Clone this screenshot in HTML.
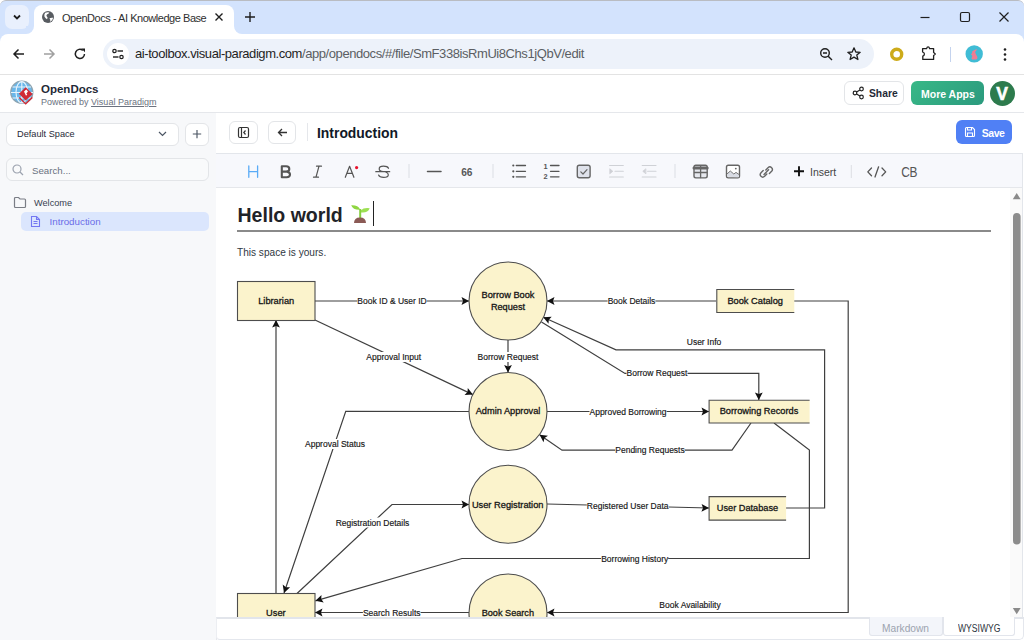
<!DOCTYPE html>
<html><head><meta charset="utf-8">
<style>
*{box-sizing:border-box;margin:0;padding:0}
html,body{width:1024px;height:640px;overflow:hidden;background:#fff;font-family:"Liberation Sans",sans-serif;position:relative}
.a{position:absolute}
#tabstrip{left:0;top:0;width:1024px;height:35px;background:#d3e3fd;border-top:1px solid #b9bcc2;border-radius:6px 6px 0 0}
#toolbar{left:0;top:34px;width:1024px;height:41px;background:#fff;border-bottom:1px solid #e3e3e3}
#omni{left:103px;top:39px;width:771px;height:30px;background:#edf2fa;border-radius:15px}
#apphdr{left:0;top:75px;width:1024px;height:38px;background:#fff;border-bottom:1px solid #e5e7eb}
#sidebar{left:0;top:113px;width:217px;height:527px;background:#f7f8fa;border-right:1px solid #e5e7eb}
#edhdr{left:216px;top:113px;width:808px;height:40px;background:#fff}
#edtb{left:216px;top:153px;width:807px;height:35px;background:#f7f8fc;border-top:1px solid #e3e6eb;border-bottom:1px solid #e5e7eb;border-right:1px solid #e3e6eb}
#doc{left:216px;top:188px;width:808px;height:429px;background:#fff;overflow:hidden}
#status{left:216px;top:617px;width:808px;height:23px;background:#fff;border-top:2px solid #e2e5eb;border-bottom:1px solid #e4e7ed;border-left:1px solid #eceef2;border-right:1.5px solid #e4e7ed;border-radius:0 0 5px 4px}
.btn{border:1px solid #e3e5e8;border-radius:6px;background:#fff}
.ic{stroke:#555;fill:none;stroke-width:1.4;stroke-linecap:round;stroke-linejoin:round}
</style></head><body>

<!-- Browser tab strip -->
<div id="tabstrip" class="a"></div>
<div class="a" style="left:5px;top:5px;width:24px;height:24px;background:#e9f0fd;border-radius:7px"></div>
<svg class="a" style="left:11px;top:11px" width="12" height="12" viewBox="0 0 12 12"><path d="M3 4.5 L6 7.5 L9 4.5" stroke="#1f1f1f" stroke-width="1.8" fill="none"/></svg>
<div class="a" style="left:34px;top:5px;width:200px;height:30px;background:#fff;border-radius:8px 8px 0 0"></div>
<div class="a" style="left:26px;top:26px;width:8px;height:9px;background:#fff"></div>
<div class="a" style="left:26px;top:26px;width:8px;height:8px;background:#d3e3fd;border-bottom-right-radius:8px"></div>
<div class="a" style="left:234px;top:26px;width:8px;height:9px;background:#fff"></div>
<div class="a" style="left:234px;top:26px;width:8px;height:8px;background:#d3e3fd;border-bottom-left-radius:8px"></div>
<svg class="a" style="left:41px;top:10px" width="14" height="14" viewBox="41 10 14 14"><circle cx="48" cy="17" r="6" fill="#585c61"/><path d="M45.2 12.8 Q47.5 12 49.3 12.6 Q48.6 14 47.2 14.3 Q45.8 15.2 46.8 16.5 Q48.4 17.8 47 19.2 Q45.6 18.4 44.5 16.7 Q43.8 14.6 45.2 12.8 Z M49.5 18.3 Q51 17.4 53.2 17.8 Q52.6 20.6 50.2 22 Q51 20.5 49.5 18.3 Z" fill="#fff"/></svg>
<div class="a" style="left:62px;top:11px;font-size:11px;color:#2f2f2f;white-space:nowrap;line-height:14px;letter-spacing:-0.46px">OpenDocs - AI Knowledge Base</div>
<svg class="a" style="left:214px;top:12px" width="10" height="10" viewBox="0 0 10 10"><path d="M1.5 1.5 L8.5 8.5 M8.5 1.5 L1.5 8.5" stroke="#1f1f1f" stroke-width="1.4"/></svg>
<svg class="a" style="left:244px;top:11px" width="12" height="12" viewBox="0 0 12 12"><path d="M6 1 V11 M1 6 H11" stroke="#1f1f1f" stroke-width="1.4"/></svg>
<svg class="a" style="left:918px;top:12px" width="14" height="10"><path d="M2.5 5.5 H11.5" stroke="#1f1f1f" stroke-width="1.2"/></svg>
<svg class="a" style="left:958px;top:11px" width="14" height="12"><rect x="2.5" y="1.5" width="9" height="9" rx="1.5" stroke="#1f1f1f" stroke-width="1.2" fill="none"/></svg>
<svg class="a" style="left:997px;top:11px" width="14" height="12"><path d="M2.5 1.5 L11.5 10.5 M11.5 1.5 L2.5 10.5" stroke="#1f1f1f" stroke-width="1.2"/></svg>

<!-- Browser toolbar -->
<div id="toolbar" class="a"></div>
<div class="a" style="left:0;top:34px;width:8px;height:8px;background:#d3e3fd"></div>
<div class="a" style="left:0;top:34px;width:8px;height:8px;background:#fff;border-top-left-radius:8px"></div>
<div class="a" style="left:1016px;top:34px;width:8px;height:8px;background:#d3e3fd"></div>
<div class="a" style="left:1016px;top:34px;width:8px;height:8px;background:#fff;border-top-right-radius:8px"></div>
<svg class="a" style="left:12px;top:47px" width="14" height="14" viewBox="0 0 14 14"><path d="M12 7 H2.5 M6.5 2.5 L2 7 L6.5 11.5" stroke="#1f1f1f" stroke-width="1.5" fill="none"/></svg>
<svg class="a" style="left:42px;top:47px" width="14" height="14" viewBox="0 0 14 14"><path d="M2 7 H11.5 M7.5 2.5 L12 7 L7.5 11.5" stroke="#a0a0a0" stroke-width="1.5" fill="none"/></svg>
<svg class="a" style="left:73px;top:47px" width="14" height="14" viewBox="0 0 14 14"><path d="M11.5 7 A4.6 4.6 0 1 1 9.8 3.3" stroke="#1f1f1f" stroke-width="1.5" fill="none"/><path d="M8.3 1.5 L12 1.5 L12 5.2 Z" fill="#1f1f1f"/></svg>
<div id="omni" class="a"></div>
<div class="a" style="left:107px;top:43px;width:22px;height:22px;background:#fff;border-radius:11px"></div>
<svg class="a" style="left:111px;top:47px" width="14" height="14" viewBox="0 0 14 14"><circle cx="3.5" cy="4" r="1.7" stroke="#1f1f1f" stroke-width="1.2" fill="none"/><path d="M6.5 4 H12" stroke="#1f1f1f" stroke-width="1.4"/><circle cx="10.5" cy="10" r="1.7" stroke="#1f1f1f" stroke-width="1.2" fill="none"/><path d="M2 10 H7.5" stroke="#1f1f1f" stroke-width="1.4"/></svg>
<div class="a" style="left:135px;top:46px;font-size:13px;color:#1f1f1f;white-space:nowrap;line-height:16px;letter-spacing:-0.43px">ai-toolbox.visual-paradigm.com<span style="color:#5b5e63">/app/opendocs/#/file/SmF338isRmUi8Chs1jQbV/edit</span></div>
<svg class="a" style="left:819px;top:47px" width="15" height="15" viewBox="0 0 15 15"><circle cx="6" cy="6" r="4.3" stroke="#1f1f1f" stroke-width="1.4" fill="none"/><path d="M4 6 H8 M9.2 9.2 L13 13" stroke="#1f1f1f" stroke-width="1.4"/></svg>
<svg class="a" style="left:846px;top:46px" width="16" height="16" viewBox="0 0 16 16"><path d="M8 1.8 L9.8 6 L14.2 6.3 L10.8 9.1 L11.9 13.5 L8 11.1 L4.1 13.5 L5.2 9.1 L1.8 6.3 L6.2 6 Z" stroke="#1f1f1f" stroke-width="1.3" fill="none" stroke-linejoin="round"/></svg>
<svg class="a" style="left:889px;top:47px" width="15" height="15" viewBox="0 0 15 15"><circle cx="7.7" cy="7.3" r="5" stroke="#cdab1a" stroke-width="3.4" fill="none"/></svg>
<svg class="a" style="left:918px;top:44px" width="20" height="20" viewBox="918 44 20 20"><path d="M922.6 48.6 H926.6 Q927 46.9 928.1 46.9 Q929.2 46.9 929.6 48.6 H933.6 V52.4 L935.3 54 L933.6 55.6 V59.4 H922.8 V56.2 Q924.4 55.5 924.4 54 Q924.4 52.6 922.6 52 Z" stroke="#1f1f1f" stroke-width="1.3" fill="none" stroke-linejoin="round"/></svg>
<div class="a" style="left:950px;top:47px;width:1px;height:15px;background:#c4d3ee"></div>
<svg class="a" style="left:965px;top:45px" width="18" height="18" viewBox="965 45 18 18"><circle cx="974.2" cy="53.9" r="8.7" fill="#40bcd5"/><path d="M972.3 51.2 Q974.5 49.8 976.9 49.1 Q976.3 50.9 975.1 52.1 Q975.6 54.5 977.3 56.8 Q978 59.6 975 59.6 H972.1 Q970.6 58.6 972.2 56.6 Q972.9 55.4 971 54.7 Q972.5 53.6 972.3 51.2 Z" fill="#ef7d93"/></svg>
<svg class="a" style="left:999px;top:47px" width="12" height="15" viewBox="0 0 12 15"><circle cx="6" cy="2.5" r="1.3" fill="#1f1f1f"/><circle cx="6" cy="7.5" r="1.3" fill="#1f1f1f"/><circle cx="6" cy="12.5" r="1.3" fill="#1f1f1f"/></svg>

<!-- App header -->
<div id="apphdr" class="a"></div>
<svg class="a" style="left:6px;top:78px" width="32" height="30" viewBox="6 78 32 30">
<circle cx="21.8" cy="92.2" r="11" fill="#6ab7ea" stroke="#8ea5b2" stroke-width="1.3"/>
<g stroke="#e8f4fc" stroke-width="1.1" fill="none"><path d="M11 92.5 H33 M12.5 87 H31 M12.5 98 H31"/><path d="M21.8 81.5 V103"/><ellipse cx="21.8" cy="92.2" rx="5.8" ry="10.6"/></g>
<path d="M25.7 87.2 L32.6 94 L25.7 100.6 L18.9 93.8 Z" fill="#d02a35"/>
<path d="M19.5 96.8 L25.7 103 L32.2 96.6 L32.6 98.3 L25.7 104.8 L19 98.3 Z" fill="#d02a35"/>
<path d="M24 91.6 L26.3 89.6 L28 91.6 L26.3 93.4 L27.3 94.6 L26 95.8 Z" fill="#fff"/>
</svg>
<div class="a" style="left:41px;top:82px;font-size:11.5px;font-weight:bold;color:#1f2937;line-height:15px;white-space:nowrap">OpenDocs</div>
<div class="a" style="left:41px;top:97px;font-size:9px;color:#6b7280;line-height:11px;white-space:nowrap">Powered by <span style="text-decoration:underline">Visual Paradigm</span></div>

<div class="a btn" style="left:844px;top:81px;width:60px;height:24px"></div>
<svg class="a" style="left:852px;top:86px" width="13" height="14" viewBox="0 0 13 14"><circle cx="9.5" cy="3" r="1.8" stroke="#222" stroke-width="1.2" fill="none"/><circle cx="3" cy="7" r="1.8" stroke="#222" stroke-width="1.2" fill="none"/><circle cx="9.5" cy="11" r="1.8" stroke="#222" stroke-width="1.2" fill="none"/><path d="M4.6 6 L7.9 4 M4.6 8 L7.9 10" stroke="#222" stroke-width="1.2"/></svg>
<div class="a" style="left:869px;top:87px;font-size:10.3px;font-weight:bold;color:#1f2937;line-height:14px">Share</div>
<div class="a" style="left:911px;top:81px;width:73px;height:24px;border-radius:6px;background:linear-gradient(135deg,#38b887,#2b9a7e)"></div>
<div class="a" style="left:921px;top:87px;font-size:10.5px;font-weight:bold;color:#fff;line-height:14px;white-space:nowrap">More Apps</div>
<div class="a" style="left:989.5px;top:81px;width:25px;height:25px;border-radius:13px;background:#2d7b4d"></div>
<div class="a" style="left:989.5px;top:83.5px;width:25px;text-align:center;font-size:17.5px;font-weight:bold;color:#fff;line-height:20px;-webkit-text-stroke:0.6px #fff">V</div>

<!-- Sidebar -->
<div id="sidebar" class="a"></div>
<div class="a btn" style="left:6px;top:123px;width:173px;height:23px"></div>
<div class="a" style="left:17px;top:128px;font-size:9.2px;color:#1f2937;line-height:12px;white-space:nowrap">Default Space</div>
<svg class="a" style="left:157px;top:129px" width="11" height="10" viewBox="0 0 11 10"><path d="M2 3 L5.5 6.5 L9 3" stroke="#4b5563" stroke-width="1.2" fill="none"/></svg>
<div class="a btn" style="left:185px;top:123px;width:24px;height:23px"></div>
<svg class="a" style="left:191px;top:128px" width="12" height="12" viewBox="0 0 12 12"><path d="M6 2 V10.2 M1.8 6 H10.2" stroke="#4b5563" stroke-width="1.15"/></svg>
<div class="a" style="left:6px;top:158px;width:203px;height:23px;border:1px solid #e3e5e8;border-radius:6px;background:#f9fafb"></div>
<svg class="a" style="left:12px;top:164px" width="12" height="12" viewBox="0 0 12 12"><circle cx="5" cy="5" r="4" stroke="#9ca3af" stroke-width="1.2" fill="none"/><path d="M8 8 L11 11" stroke="#9ca3af" stroke-width="1.2"/></svg>
<div class="a" style="left:32px;top:165px;font-size:9.7px;color:#6b7280;line-height:12px">Search...</div>
<svg class="a" style="left:13px;top:196px" width="14" height="13" viewBox="0 0 14 13"><path d="M1.5 2.5 A1 1 0 0 1 2.5 1.5 H5.5 L7 3 H11.5 A1 1 0 0 1 12.5 4 V10.5 A1 1 0 0 1 11.5 11.5 H2.5 A1 1 0 0 1 1.5 10.5 Z" stroke="#7a7d85" stroke-width="1.2" fill="none"/></svg>
<div class="a" style="left:34px;top:197px;font-size:9.2px;color:#374151;line-height:12px">Welcome</div>
<div class="a" style="left:21px;top:212px;width:188px;height:19px;background:#dbe6fd;border-radius:5px"></div>
<svg class="a" style="left:30px;top:215px" width="11" height="13" viewBox="0 0 11 13"><path d="M1.5 1.5 H6.5 L9.5 4.5 V11.5 H1.5 Z M6.5 1.5 V4.5 H9.5 M3.5 6.5 H7.5 M3.5 8.5 H7.5" stroke="#7478f2" stroke-width="1.1" fill="none"/></svg>
<div class="a" style="left:49.5px;top:216px;font-size:9.8px;color:#6a6de8;line-height:12px">Introduction</div>

<!-- Editor header -->
<div id="edhdr" class="a"></div>
<div class="a btn" style="left:229px;top:121px;width:29px;height:23px"></div>
<svg class="a" style="left:237px;top:126px" width="13" height="13" viewBox="0 0 13 13"><rect x="1.5" y="1.5" width="10" height="10" rx="1.5" stroke="#333" stroke-width="1.2" fill="none"/><path d="M4.5 1.5 V11.5 M8.5 4.5 L6.8 6.5 L8.5 8.5" stroke="#333" stroke-width="1.2" fill="none"/></svg>
<div class="a btn" style="left:268px;top:121px;width:28px;height:23px"></div>
<svg class="a" style="left:276px;top:126px" width="13" height="13" viewBox="0 0 13 13"><path d="M11 6.5 H2.5 M6 3 L2.5 6.5 L6 10" stroke="#333" stroke-width="1.3" fill="none"/></svg>
<div class="a" style="left:307px;top:123px;width:1px;height:18px;background:#e5e7eb"></div>
<div class="a" style="left:317px;top:125px;font-size:13.9px;font-weight:bold;color:#111827;line-height:16px">Introduction</div>
<div class="a" style="left:956px;top:120px;width:56px;height:24px;border-radius:6px;background:#5080f5"></div>
<svg class="a" style="left:964px;top:126px" width="12" height="12" viewBox="0 0 12 12"><path d="M1.5 2.5 A1 1 0 0 1 2.5 1.5 H8.5 L10.5 3.5 V9.5 A1 1 0 0 1 9.5 10.5 H2.5 A1 1 0 0 1 1.5 9.5 Z M3.5 1.5 V4 H7.5 V1.5 M3.5 10.5 V7 H8.5 V10.5" stroke="#fff" stroke-width="1.1" fill="none"/></svg>
<div class="a" style="left:981.8px;top:126.5px;font-size:10.5px;font-weight:bold;color:#fff;line-height:13px;letter-spacing:-0.5px">Save</div>

<!-- Editor toolbar -->
<div id="edtb" class="a"></div>
<svg class="a" style="left:216px;top:153px" width="808" height="35" viewBox="216 153 808 35">
<g fill="none" stroke-linecap="round" stroke-linejoin="round">
<path d="M248.8 166 V177.3 M257.6 166 V177.3 M248.8 171.6 H257.6" stroke="#5aabf6" stroke-width="1.3"/>
<path d="M281.8 166.2 H286.2 Q289.3 166.2 289.3 168.9 Q289.3 171 287 171.6 Q290 172.2 290 174.6 Q290 177.2 286.6 177.2 H281.8 Z M281.8 171.6 H286.6" stroke="#555" stroke-width="2.1"/>
<path d="M316.5 166.2 H321.5 M313.5 177.2 H318.5 M319 166.2 L316 177.2" stroke="#555" stroke-width="1.2"/>
<path d="M345.3 177.3 L349.6 166.3 L353.9 177.3 M346.9 173.4 H352.3" stroke="#555" stroke-width="1.2"/>
<path d="M388.5 168.3 Q387.5 166.2 383.5 166.2 Q379.2 166.2 379.2 168.9 Q379.2 171 383.2 171.6 M386 172.3 Q388.3 173.2 388.3 174.7 Q388.3 177.3 383.7 177.3 Q379.5 177.3 378.6 175 M375.8 171.7 H389.7" stroke="#555" stroke-width="1.2"/>
<path d="M427.5 171.5 H441" stroke="#555" stroke-width="1.5"/>
<path d="M513.3 165.5 h0.01 M513.3 171.3 h0.01 M513.3 176.8 h0.01" stroke="#555" stroke-width="2.2"/>
<path d="M516.3 165.5 H525.5 M516.3 171.3 H525.5 M516.3 176.8 H525.5" stroke="#555" stroke-width="1.3"/>
<path d="M550.5 165.5 H559 M550.5 171.3 H559 M550.5 176.8 H559" stroke="#555" stroke-width="1.3"/>
<rect x="577.3" y="165.3" width="12.8" height="12.5" rx="2" fill="#dfe2eb" stroke="#666" stroke-width="1.4"/>
<path d="M580.8 171.8 L583 174 L587 169.6" stroke="#666" stroke-width="1.2"/>
<path d="M609.6 165.5 H623.3 M609.6 177 H623.3 M615 171.3 H623.3" stroke="#cfd1d6" stroke-width="1.1"/>
<path d="M610 169 L612.8 171.3 L610 173.6 Z" fill="#cfd1d6" stroke="#cfd1d6" stroke-width="0.8"/>
<path d="M642.2 165.5 H656 M642.2 177 H656 M647.6 171.3 H656" stroke="#cfd1d6" stroke-width="1.1"/>
<path d="M645.6 169 L642.8 171.3 L645.6 173.6 Z" fill="#cfd1d6" stroke="#cfd1d6" stroke-width="0.8"/>
<rect x="694" y="165.3" width="13.2" height="12.6" rx="1.8" fill="#e6e8ee" stroke="#666" stroke-width="1.4"/>
<path d="M694 168 H707.2" stroke="#666" stroke-width="3"/>
<path d="M700.6 166 V177.6 M694.5 172.5 H706.8" stroke="#666" stroke-width="1.3"/>
<rect x="726.5" y="165.3" width="13" height="12.6" rx="1.8" fill="#fff" stroke="#666" stroke-width="1.4"/>
<path d="M727.2 176.8 V173.8 L730.3 171 L733.8 174 L736 172.4 L739 174.5 V177.3 Z" fill="#d9dce4" stroke="none"/>
<path d="M727.2 173.8 L730.3 171 L733.8 174 L736 172.4 L739 174.5" stroke="#777" stroke-width="1"/>
<circle cx="735.8" cy="168.6" r="0.9" fill="#666"/>
<path d="M763.2 170.5 L761 172.7 Q759.3 174.6 761 176.3 Q762.7 178 764.6 176.3 L766.8 174.1 M769.4 173.5 L771.6 171.3 Q773.3 169.4 771.6 167.7 Q769.9 166 768 167.7 L765.8 169.9 M764 174.4 L768.6 169.8" stroke="#666" stroke-width="1.4"/>
<path d="M799 166.3 V176.3 M794 171.3 H804" stroke="#111" stroke-width="1.9" stroke-linecap="butt"/>
<path d="M871.5 168 L867.8 171.9 L871.5 175.8 M882 168 L885.7 171.9 L882 175.8 M878.6 166.8 L875 177" stroke="#555" stroke-width="1.3"/>
</g>
<g fill="#dcdee3"><rect x="408.5" y="164" width="1" height="14"/><rect x="492.5" y="164" width="1" height="14"/><rect x="674.5" y="164" width="1" height="14"/><rect x="850.8" y="165" width="1" height="13"/></g>
<text x="461.3" y="175.5" font-family="Liberation Sans" font-weight="bold" font-size="10.2" fill="#585858" letter-spacing="-0.1">66</text>
<text x="543.6" y="169.2" font-family="Liberation Sans" font-weight="bold" font-size="7.4" fill="#555">1</text>
<text x="543.6" y="179.3" font-family="Liberation Sans" font-weight="bold" font-size="7.4" fill="#555">2</text>
<text x="810" y="175.5" font-family="Liberation Sans" font-size="10.5" fill="#444">Insert</text>
<text x="901.3" y="177" font-family="Liberation Sans" font-size="14.2" fill="#555" letter-spacing="-0.6" transform="translate(901.3 0) scale(0.84 1) translate(-901.3 0)">CB</text>
<circle cx="356.6" cy="167.6" r="1.6" fill="#e8112d"/>
</svg>

<!-- Document -->
<div id="doc" class="a"></div>
<svg class="a" style="left:216px;top:188px" width="808" height="429" viewBox="216 188 808 429">
<g><path d="M315 301 L469 301" stroke="#3f3f3f" stroke-width="1.2" fill="none"/><path d="M469.0 301.0 L461.5 304.9 L463.0 301.0 L461.5 297.1 Z" fill="#111"/><path d="M716 301 L547 301" stroke="#3f3f3f" stroke-width="1.2" fill="none"/><path d="M547.0 301.0 L554.5 297.1 L553.0 301.0 L554.5 304.9 Z" fill="#111"/><path d="M508 340 L508 372.5" stroke="#3f3f3f" stroke-width="1.2" fill="none"/><path d="M508.0 372.5 L504.1 365.0 L508.0 366.5 L511.9 365.0 Z" fill="#111"/><path d="M315 320 L472.9 394.6" stroke="#3f3f3f" stroke-width="1.2" fill="none"/><path d="M472.9 394.6 L464.5 394.9 L467.5 392.0 L467.8 387.9 Z" fill="#111"/><path d="M541.5 322 L625 373.4 L758.8 373.4 L758.8 400" stroke="#3f3f3f" stroke-width="1.2" fill="none"/><path d="M758.8 400.0 L754.9 392.5 L758.8 394.0 L762.7 392.5 Z" fill="#111"/><path d="M786 508 L824.6 508 L824.6 349.9 L616 349.9 L543.3 317.2" stroke="#3f3f3f" stroke-width="1.2" fill="none"/><path d="M543.3 317.2 L551.7 316.7 L548.8 319.7 L548.5 323.8 Z" fill="#111"/><path d="M794 301 L848.2 301 L848.2 612.5 L547 612.5" stroke="#3f3f3f" stroke-width="1.2" fill="none"/><path d="M547.0 612.5 L554.5 608.6 L553.0 612.5 L554.5 616.4 Z" fill="#111"/><path d="M547 411.5 L709 411.5" stroke="#3f3f3f" stroke-width="1.2" fill="none"/><path d="M709.0 411.5 L701.5 415.4 L703.0 411.5 L701.5 407.6 Z" fill="#111"/><path d="M751 423 L732 450.2 L562 450.2 L539.6 434.7" stroke="#3f3f3f" stroke-width="1.2" fill="none"/><path d="M539.6 434.7 L548.0 435.8 L544.5 438.1 L543.5 442.2 Z" fill="#111"/><path d="M774 423 L809.4 450 L809.4 558.5 L462 558.5 L315.4 600.8" stroke="#3f3f3f" stroke-width="1.2" fill="none"/><path d="M315.4 600.8 L321.5 595.0 L321.2 599.1 L323.7 602.5 Z" fill="#111"/><path d="M469 411.5 L345.75 411.25 L284 593" stroke="#3f3f3f" stroke-width="1.2" fill="none"/><path d="M284.0 593.0 L282.7 584.6 L285.9 587.3 L290.1 587.2 Z" fill="#111"/><path d="M297 593.5 L392 504.5 L469 504.5" stroke="#3f3f3f" stroke-width="1.2" fill="none"/><path d="M469.0 504.5 L461.5 508.4 L463.0 504.5 L461.5 500.6 Z" fill="#111"/><path d="M547 504 L709 508" stroke="#3f3f3f" stroke-width="1.2" fill="none"/><path d="M709.0 508.0 L701.4 511.7 L703.0 507.9 L701.6 503.9 Z" fill="#111"/><path d="M276 593.5 L276 320" stroke="#3f3f3f" stroke-width="1.2" fill="none"/><path d="M276.0 320.0 L279.9 327.5 L276.0 326.0 L272.1 327.5 Z" fill="#111"/><path d="M469 612.5 L315 612.5" stroke="#3f3f3f" stroke-width="1.2" fill="none"/><path d="M315.0 612.5 L322.5 608.6 L321.0 612.5 L322.5 616.4 Z" fill="#111"/></g>
<g><rect x="357.3" y="296" width="69.5" height="10" fill="#fff"/><rect x="607.6" y="296" width="47.8" height="10" fill="#fff"/><rect x="477.5" y="352" width="61.0" height="10" fill="#fff"/><rect x="366.3" y="352" width="54.9" height="10" fill="#fff"/><rect x="626.5" y="368" width="61.0" height="10" fill="#fff"/><rect x="589.5" y="406.5" width="77.1" height="10" fill="#fff"/><rect x="615.2" y="445" width="69.5" height="10" fill="#fff"/><rect x="601.1" y="553.6" width="67.1" height="10" fill="#fff"/><rect x="305.0" y="439" width="60.0" height="10" fill="#fff"/><rect x="335.6" y="517.5" width="73.8" height="10" fill="#fff"/><rect x="586.8" y="501" width="81.8" height="10" fill="#fff"/><rect x="362.9" y="607.5" width="57.7" height="10" fill="#fff"/></g>
<g><rect x="237.5" y="281.5" width="77.5" height="39" fill="#fbf3cc" stroke="#4d4d4d" stroke-width="1.1"/><rect x="237.5" y="593.5" width="77.5" height="39" fill="#fbf3cc" stroke="#4d4d4d" stroke-width="1.1"/><circle cx="508" cy="301" r="39" fill="#fbf3cc" stroke="#4d4d4d" stroke-width="1.1"/><circle cx="508" cy="411.5" r="39" fill="#fbf3cc" stroke="#4d4d4d" stroke-width="1.1"/><circle cx="508" cy="504.3" r="39" fill="#fbf3cc" stroke="#4d4d4d" stroke-width="1.1"/><circle cx="508" cy="613" r="39" fill="#fbf3cc" stroke="#4d4d4d" stroke-width="1.1"/><rect x="716.8" y="289.5" width="77.5" height="23.0" fill="#fbf3cc"/><path d="M794.3 289.5 H716.8 V312.5 H794.3" stroke="#4d4d4d" stroke-width="1.1" fill="none"/><rect x="709.1" y="400.3" width="100.5" height="22.69999999999999" fill="#fbf3cc"/><path d="M809.6 400.3 H709.1 V423 H809.6" stroke="#4d4d4d" stroke-width="1.1" fill="none"/><rect x="709.1" y="496.6" width="77.0" height="23.5" fill="#fbf3cc"/><path d="M786.1 496.6 H709.1 V520.1 H786.1" stroke="#4d4d4d" stroke-width="1.1" fill="none"/></g>
<g font-family="Liberation Sans" font-size="8.5" fill="#111" stroke="#222" stroke-width="0.15" text-anchor="middle"><text x="392" y="304">Book ID &amp; User ID</text><text x="631.5" y="304">Book Details</text><text x="508" y="360">Borrow Request</text><text x="393.7" y="360">Approval Input</text><text x="657" y="376">Borrow Request</text><text x="704" y="344.5">User Info</text><text x="690" y="608">Book Availability</text><text x="628" y="414.5">Approved Borrowing</text><text x="650" y="453">Pending Requests</text><text x="634.7" y="561.6">Borrowing History</text><text x="335" y="447">Approval Status</text><text x="372.5" y="525.5">Registration Details</text><text x="627.7" y="509">Registered User Data</text><text x="391.7" y="615.5">Search Results</text></g>
<g font-family="Liberation Sans" font-size="9.2" fill="#111" stroke="#1a1a1a" stroke-width="0.3" text-anchor="middle"><text x="276.20" y="303.7" textLength="36" lengthAdjust="spacingAndGlyphs">Librarian</text><text x="508.00" y="297.7" textLength="52.9" lengthAdjust="spacingAndGlyphs">Borrow Book</text><text x="508.00" y="309.6" textLength="34.2" lengthAdjust="spacingAndGlyphs">Request</text><text x="755.20" y="303.8" textLength="55.6" lengthAdjust="spacingAndGlyphs">Book Catalog</text><text x="508.00" y="413.6" textLength="64.7" lengthAdjust="spacingAndGlyphs">Admin Approval</text><text x="759.00" y="414.0" textLength="78.6" lengthAdjust="spacingAndGlyphs">Borrowing Records</text><text x="507.70" y="507.6" textLength="71.6" lengthAdjust="spacingAndGlyphs">User Registration</text><text x="747.45" y="510.8" textLength="61.3" lengthAdjust="spacingAndGlyphs">User Database</text><text x="275.85" y="615.8" textLength="19.5" lengthAdjust="spacingAndGlyphs">User</text><text x="507.85" y="615.6" textLength="52.3" lengthAdjust="spacingAndGlyphs">Book Search</text></g>
</svg>
<div class="a" style="left:237.5px;top:203.5px;font-size:19.55px;font-weight:bold;color:#1f2328;line-height:22px;white-space:nowrap">Hello world</div>
<div class="a" style="left:237px;top:230px;width:754px;height:2px;background:#8a8a8a"></div>
<div class="a" style="left:237px;top:246.5px;font-size:10.1px;color:#2f3742;line-height:12px;white-space:nowrap">This space is yours.</div>
<div class="a" style="left:373px;top:201px;width:1px;height:25px;background:#222"></div>

<!-- emoji + cursor -->
<svg class="a" style="left:349px;top:203px" width="22" height="22" viewBox="349 203 22 22">
<path d="M360 209.3 Q358 204.8 351.2 205.2 Q353 210.3 360.5 209.8 Z" fill="#8fd642"/>
<path d="M361 210.3 Q363.5 207.4 369.7 208.2 Q367.6 213.3 361 212.4 Z" fill="#9de053"/>
<path d="M359.2 209 H361.2 V218.5 H359.2 Z" fill="#86cf3e"/>
<path d="M354 223 Q354 217.4 360 217.4 Q366 217.4 366 223 Z" fill="#8b5a55"/>
</svg>
<!-- scrollbar -->
<div class="a" style="left:1010px;top:188px;width:13px;height:429px;background:#fafafa"></div>
<svg class="a" style="left:1010px;top:188px" width="13" height="429" viewBox="1010 188 13 429">
<path d="M1012.8 199.2 L1016.7 193 L1020.6 199.2 Z" fill="#8a8a8a"/>
<rect x="1013" y="213" width="7.6" height="331.5" rx="3.8" fill="#8c8c8c"/>
<path d="M1012.8 608 L1016.7 614.2 L1020.6 608 Z" fill="#8a8a8a"/>
</svg>
<div class="a" style="left:1022px;top:188px;width:1px;height:430px;background:#e3e6eb"></div>
<!-- Status bar -->
<div id="status" class="a"></div>
<div class="a" style="left:869px;top:617px;width:74px;height:19px;background:#f3f5fa;border:1px solid #e2e5ec;border-top:none;border-radius:0 0 3px 3px"></div>
<div class="a" style="left:882px;top:622.5px;font-size:10.2px;color:#9ca3af;line-height:12px;white-space:nowrap">Markdown</div>
<div class="a" style="left:943px;top:617px;width:72px;height:19px;background:#fff;border:1px solid #e2e5ec;border-top:none;border-radius:0 0 3px 3px"></div>
<div class="a" style="left:958px;top:622.5px;font-size:10px;color:#2d3540;line-height:12px;white-space:nowrap;transform:scaleX(0.86);transform-origin:0 0">WYSIWYG</div>


</body></html>
